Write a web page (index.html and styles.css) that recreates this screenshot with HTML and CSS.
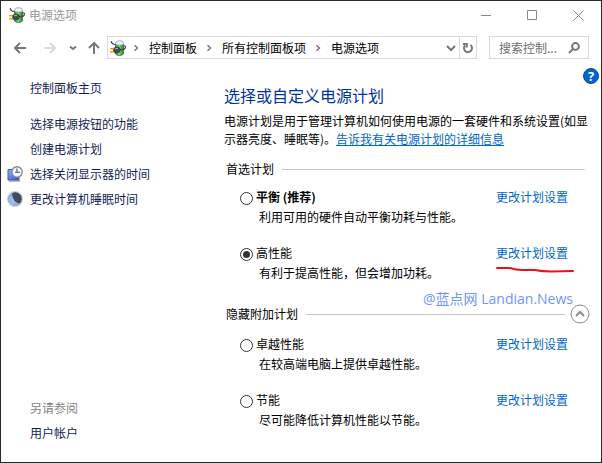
FILE: index.html
```html
<!DOCTYPE html>
<html lang="zh-CN">
<head>
<meta charset="utf-8">
<meta name="viewport" content="width=device-width, initial-scale=1">
<title>电源选项</title>
<link rel="stylesheet" href="styles.css">
</head>
<body>
<svg class="defs" aria-hidden="true">
  <defs>
    <linearGradient id="green" x1="0" x2="1" y1="0" y2="0">
      <stop offset="0" stop-color="#1f9a36"/><stop offset=".5" stop-color="#6fdc70"/><stop offset="1" stop-color="#15802c"/>
    </linearGradient>
    <linearGradient id="blue" x1="0" x2="1" y1="0" y2="1">
      <stop offset="0" stop-color="#8fb4ff"/><stop offset="1" stop-color="#2b50d8"/>
    </linearGradient>
    <radialGradient id="moon" cx=".4" cy=".6" r=".6">
      <stop offset="0" stop-color="#a9c6ee"/><stop offset=".7" stop-color="#8aa9dc"/><stop offset="1" stop-color="#c4cbd6"/>
    </radialGradient>
    <symbol id="power" viewBox="0 0 16 16">
      <path d="M5.500 3.500H13.500V13.500Q13 15.500 9.500 15.500Q6.500 15.500 5.500 14Z" fill="url(#green)" stroke="#3d5a44" stroke-width=".7"/>
      <path d="M5.500 3.500Q5.500 .6 9.500 .6Q13.500 .6 13.500 3.500V4.500Q9.500 6 5.500 4.500Z" fill="#eef1f8" stroke="#8b93a8" stroke-width=".7"/>
      <path d="M1.200 1.200Q1.800 4.800 5.500 4.500M10.500 9.500Q15.500 10 15.400 7Q15.200 5.500 13.800 5.800" fill="none" stroke="#444" stroke-width="1.200"/>
      <path d="M3.500 8.200L6.500 7Q10.500 7 10.500 9.800Q10.500 12.800 6.500 13L3.500 12Z" fill="#4a4a4c" stroke="#222" stroke-width=".5"/>
      <path d="M5 8.700L8 8.300" stroke="#b0b0b0" stroke-width="1"/>
      <path d="M0 8.700H3.500M0 11.700H3.500" stroke="#e0a810" stroke-width="1.500"/>
    </symbol>
    <symbol id="crumb" viewBox="0 0 6 8"><path d="M1.500 1.200L4.500 4L1.500 6.800" fill="none" stroke="#777" stroke-width="1.500"/></symbol>
  </defs>
</svg>
<div class="window">
  <header class="titlebar">
    <svg class="icon" aria-hidden="true"><use href="#power"/></svg>
    <span class="title">电源选项</span>
    <button class="caption" aria-label="最小化"><svg class="glyph" viewBox="0 0 11 11"><path d="M0 5.500H10"/></svg></button>
    <button class="caption" aria-label="最大化"><svg class="glyph" viewBox="0 0 11 11"><path d="M.5 .5H9.500V9.500H.5Z"/></svg></button>
    <button class="caption" aria-label="关闭"><svg class="glyph" viewBox="0 0 11 11"><path d="M.5 .5L10.500 10.500M10.500 .5L.5 10.500"/></svg></button>
  </header>

  <div class="toolbar">
    <div class="arrows">
      <button class="tool" aria-label="后退"><svg class="arrow" viewBox="0 0 12 12"><path d="M12 6H1.500M6 1L1 6L6 11"/></svg></button>
      <button class="tool" aria-label="前进" disabled><svg class="arrow" viewBox="0 0 12 12"><path d="M0 6H10.500M6 1L11 6L6 11"/></svg></button>
      <button class="tool" aria-label="最近的位置"><svg class="chevron" viewBox="0 0 8 6"><path d="M1 1.500L4 4L7 1.500"/></svg></button>
      <button class="tool" aria-label="上移"><svg class="arrow" viewBox="0 0 12 12"><path d="M6 12V1.500M1 6L6 1L11 6"/></svg></button>
    </div>
    <nav class="address" aria-label="地址">
      <svg class="icon" aria-hidden="true"><use href="#power"/></svg>
      <svg class="crumb" aria-hidden="true"><use href="#crumb"/></svg>
      <a href="#">控制面板</a>
      <svg class="crumb" aria-hidden="true"><use href="#crumb"/></svg>
      <a href="#">所有控制面板项</a>
      <svg class="crumb" aria-hidden="true"><use href="#crumb"/></svg>
      <a href="#">电源选项</a>
      <button class="tool drop" aria-label="展开"><svg class="expand" viewBox="0 0 10 8"><path d="M1 2L5 6L9 2"/></svg></button>
      <button class="tool refresh" aria-label="刷新"><svg class="reload" viewBox="0 0 12 12"><path d="M8.500 3A4 4 0 1 1 3 3.500M1 2H4.800V5.500"/></svg></button>
    </nav>
    <div class="search">
      <input type="text" placeholder="搜索控制..." aria-label="搜索控制面板">
      <svg class="lens" viewBox="0 0 12 12" aria-hidden="true"><circle cx="7.500" cy="4.500" r="3.400"/><path d="M5 7L1 11"/></svg>
    </div>
  </div>

  <div class="body">
    <button class="help" aria-label="帮助">?</button>
    <aside class="sidebar">
      <a class="home" href="#">控制面板主页</a>
      <ul class="tasks">
        <li><a href="#">选择电源按钮的功能</a></li>
        <li><a href="#">创建电源计划</a></li>
        <li>
          <svg class="icon" viewBox="0 0 16 16" aria-hidden="true"><path d="M1 3.500H12V14H1Z" fill="url(#blue)" stroke="#4456a8"/><path d="M2 15H13" stroke="#777" stroke-width="1"/><circle cx="10" cy="6" r="5.200" fill="#f3f6f8" stroke="#82878c" stroke-width="1.400"/><path d="M10 2.500V6.300H13M8 6.300H10" fill="none" stroke="#456" stroke-width="1.100"/></svg>
          <a href="#">选择关闭显示器的时间</a>
        </li>
        <li>
          <svg class="icon" viewBox="0 0 16 16" aria-hidden="true"><circle cx="8" cy="8" r="7.500" fill="url(#moon)" stroke="#c8ced8"/><path d="M5 2.200Q10 -.5 13.800 4Q16 9 13 12.500Q6 12 5 2.200Z" fill="#414b5d"/></svg>
          <a href="#">更改计算机睡眠时间</a>
        </li>
      </ul>
      <div class="related">
        <span class="muted">另请参阅</span>
        <a href="#">用户帐户</a>
      </div>
    </aside>

    <main class="content">
      <h1>选择或自定义电源计划</h1>
      <p class="intro">电源计划是用于管理计算机如何使用电源的一套硬件和系统设置(如显示器亮度、睡眠等)。<a href="#">告诉我有关电源计划的详细信息</a></p>

      <section class="group">
        <h2>首选计划</h2>
        <div class="plan">
          <input type="radio" name="plan" id="balanced">
          <label class="strong" for="balanced">平衡 (推荐)</label>
          <a href="#">更改计划设置</a>
          <p>利用可用的硬件自动平衡功耗与性能。</p>
        </div>
        <div class="plan">
          <input type="radio" name="plan" id="high" checked>
          <label for="high">高性能</label>
          <a class="marked" href="#">更改计划设置<svg class="stroke" viewBox="0 0 78 8" aria-hidden="true"><path d="M1 2H14Q20 4 26 4H39Q46 5.500 55 5.500L77 5"/></svg></a>
          <p>有利于提高性能，但会增加功耗。</p>
        </div>
      </section>

      <section class="group extra">
        <span class="watermark">@蓝点网 Landian.News</span>
        <h2>隐藏附加计划
          <button class="collapse" aria-label="隐藏附加计划"><svg viewBox="0 0 20 20"><circle cx="10" cy="10" r="9"/><path d="M6 12L10 8L14 12"/></svg></button>
        </h2>
        <div class="plan">
          <input type="radio" name="plan" id="ultimate">
          <label for="ultimate">卓越性能</label>
          <a href="#">更改计划设置</a>
          <p>在较高端电脑上提供卓越性能。</p>
        </div>
        <div class="plan">
          <input type="radio" name="plan" id="saver">
          <label for="saver">节能</label>
          <a href="#">更改计划设置</a>
          <p>尽可能降低计算机性能以节能。</p>
        </div>
      </section>
    </main>
  </div>
</div>
</body>
</html>
```
FILE: styles.css
```css
* { box-sizing: border-box; }

body {
  margin: 0;
  font: 12px/18px "Noto Sans CJK SC", sans-serif;
  color: #000;
  background: #fff;
}

a { color: #0066cc; text-decoration: none; }
h1, h2, p, ul { margin: 0; padding: 0; font-weight: 400; }
button { padding: 0; border: 0; background: none; font: inherit; }
svg { display: block; flex: none; }
.defs { position: absolute; width: 0; height: 0; }

.window {
  display: flex;
  flex-direction: column;
  min-height: 100vh;
  border: 1px solid #29282c;
  background: #fff;
}

.icon { width: 16px; height: 16px; }

/* Title bar */
.titlebar { display: flex; align-items: center; height: 28px; padding-left: 8px; }
.title { flex: 1; margin-left: 4px; color: #999; }
.caption { display: grid; place-items: center; width: 46px; height: 28px; }
.glyph { width: 11px; height: 11px; fill: none; stroke: #888; stroke-width: 1; }

/* Navigation bar */
.toolbar { display: flex; align-items: center; gap: 12px; padding: 7px 12px 0 13px; }
.arrows { display: flex; align-items: center; margin-right: -5px; }
.tool { display: grid; place-items: center; flex: none; }
.arrow { width: 12px; height: 12px; }
.arrow, .chevron, .expand, .reload { fill: none; stroke: #777; stroke-width: 2; }
.chevron { width: 8px; height: 6px; }
.arrows .tool + .tool { margin-left: 18px; }
.arrows .tool:nth-child(3) { margin-left: 13px; }
.arrows .tool:nth-child(4) { margin-left: 11px; }
.tool:disabled .arrow { stroke: #d9d9d9; }

.address { display: flex; align-items: center; flex: 1; height: 23px; padding-left: 2px; border: 1px solid #d9d9d9; }
.address a { color: #000; }
.crumb { width: 6px; height: 8px; margin: 0 10px 0 9px; }
.icon + .crumb { margin-left: 7px; }
.expand { width: 10px; height: 8px; }
.reload { width: 12px; height: 12px; }
.drop { width: 16px; margin-left: auto; }
.refresh { width: 17px; height: 21px; border-left: 1px solid #d9d9d9; }

.search { display: flex; align-items: center; width: 100px; height: 23px; padding: 0 8px 0 9px; border: 1px solid #d9d9d9; }
.search input { flex: 1; min-width: 0; padding: 0; border: 0; outline: 0; background: none; font: inherit; color: #6d6d6d; }
.search input::placeholder { color: #6d6d6d; opacity: 1; }
.lens { width: 12px; height: 12px; fill: none; stroke: #777; stroke-width: 2; }

/* Page body */
.body { position: relative; display: grid; grid-template-columns: 223px 1fr; flex: 1; }
.help {
  position: absolute;
  top: 9px;
  right: 2px;
  width: 16px;
  height: 16px;
  border: 1px solid #094f96;
  border-radius: 50%;
  background: #0066cc;
  color: #fff;
  font: 700 13px/14px "Open Sans", sans-serif;
}

.sidebar { display: flex; flex-direction: column; padding: 16px 0 17px 29px; line-height: 25px; }
.sidebar a { color: #151c55; }
.tasks { margin-top: 11px; list-style: none; }
.tasks li { display: flex; align-items: center; }
.tasks .icon { margin: 0 7px 0 -23px; }
.related { display: flex; flex-direction: column; margin-top: auto; }
.muted { color: #838383; }

.content { padding: 24px 12px 0 0; }
h1 { font-size: 16px; line-height: 24px; color: #003399; }
.intro { margin-top: 5px; line-height: 18px; }
.intro a { text-decoration: underline; }

.group { position: relative; padding-left: 2px; }
h2 { display: flex; align-items: center; gap: 8px; font-size: 12px; line-height: 18px; }
h2::after { content: ""; flex: 1; height: 1px; margin-right: 4px; background: #c5c5c5; }
.group > h2 { margin-top: 12px; }

.plan {
  display: grid;
  grid-template-columns: 13px 1fr auto;
  column-gap: 3px;
  align-items: center;
  padding: 0 21px 0 14px;
  line-height: 20px;
}
.plan p { grid-column: 2 / -1; padding-left: 3px; }
.plan + .plan { margin-top: 16px; }
h2 + .plan { margin-top: 9px; }
.strong { font-weight: 700; }

.plan input {
  appearance: none;
  display: grid;
  place-items: center;
  width: 13px;
  height: 13px;
  margin: 2px 0 0;
  border: 1px solid #333;
  border-radius: 50%;
  background: #fff;
}
.plan input:checked::before { content: ""; width: 7px; height: 7px; border-radius: 50%; background: #333; }

.marked { position: relative; }
.stroke {
  position: absolute;
  top: 23px;
  left: 0;
  width: 78px;
  height: 8px;
  fill: none;
  stroke: #ed1018;
  stroke-width: 2;
  stroke-linecap: round;
}

.group.extra > h2 { margin-top: 22px; }
.extra h2 + .plan { margin-top: 11px; }
.collapse { order: 2; width: 20px; height: 20px; margin: -1px -1px -1px -7px; }
.collapse svg { width: 20px; height: 20px; fill: none; stroke: #8b8b8b; stroke-width: 1; }
.collapse path { stroke-width: 2; }

.watermark {
  position: absolute;
  top: -18px;
  right: 16px;
  font: 14px/24px "Open Sans", "Noto Sans CJK SC", sans-serif;
  color: #7096f8;
}
```
